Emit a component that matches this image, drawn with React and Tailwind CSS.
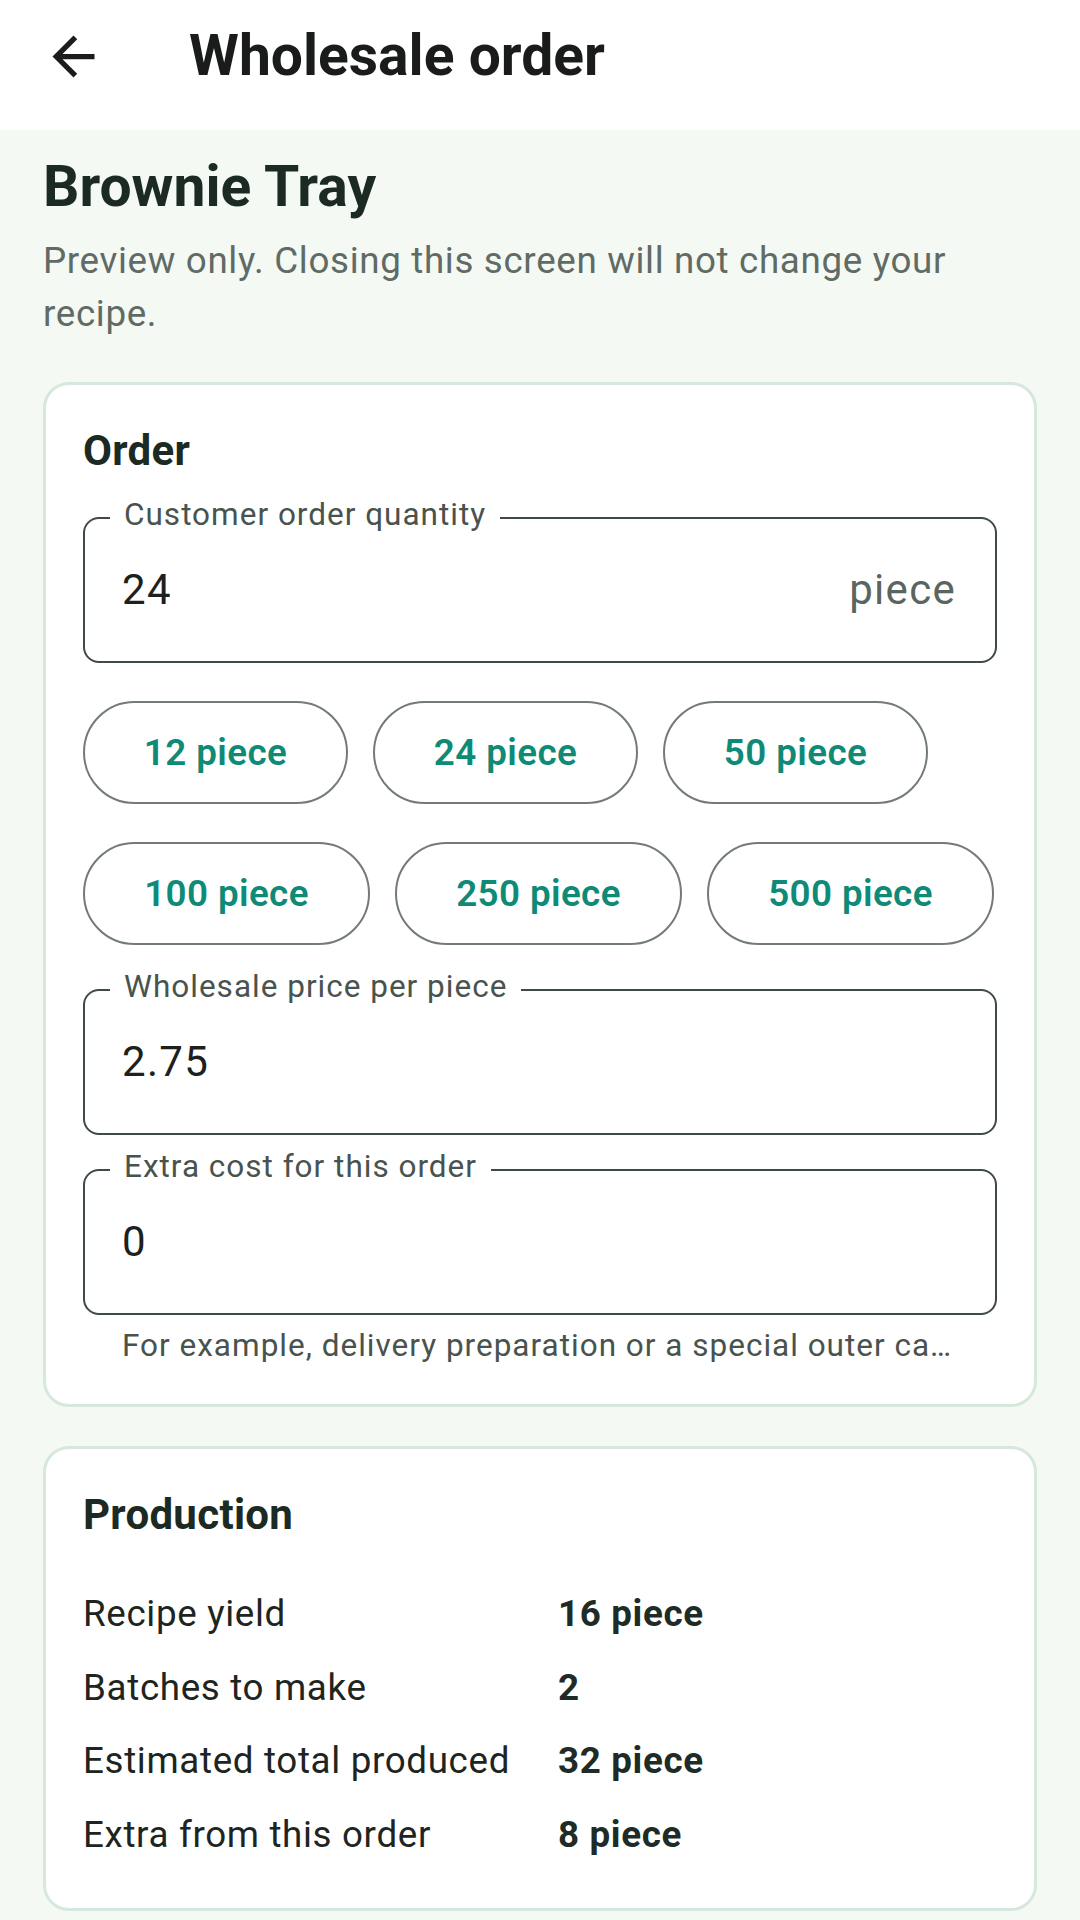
// App.jsx
import React from "react";

const Field = ({ label, value, suffix, className }) => {
  return (
    <div
      className={`relative h-[146px] rounded-[16px] border-2 border-[#3f4a45] flex items-center justify-between pl-[37px] pr-[39px] ${className}`}
    >
      <span className="absolute left-[25px] top-[-22px] bg-white px-[14px] text-[31.5px] leading-[36px] tracking-[1px] text-[#49534e]">
        {label}
      </span>
      <span className="text-[42px] leading-[48px] tracking-[1.3px] text-[#1c211e]">
        {value}
      </span>
      {suffix && (
        <span className="text-[42px] leading-[48px] tracking-[1.3px] text-[#5b6560]">
          {suffix}
        </span>
      )}
    </div>
  );
};

const Chip = ({ label, width }) => {
  return (
    <div
      className={`h-[103px] ${width} rounded-full border-2 border-[#737b76] flex items-center justify-center text-[36.75px] font-semibold tracking-[0.4px] text-[#0e8a77]`}
    >
      {label}
    </div>
  );
};

const Row = ({ label, value }) => {
  return (
    <div className="flex text-[36.75px] leading-[52.5px] tracking-[0.66px]">
      <div className="w-[475px] text-[#1e2520]">{label}</div>
      <div className="font-bold text-[#1e2b26]">{value}</div>
    </div>
  );
};

const App = () => {
  return (
    <div
      className="w-[1080px] min-h-[1920px] bg-[#f4f9f4]"
      style={{ fontFamily: "Roboto, 'Noto Sans', sans-serif" }}
    >
      <div className="h-[130px] bg-white flex items-center pb-[18px]">
        <svg
          className="ml-[42px] w-[63px] h-[63px]"
          viewBox="0 0 24 24"
          fill="#1b1d1c"
        >
          <path d="M20 11H7.83l5.59-5.59L12 4l-8 8 8 8 1.41-1.41L7.83 13H20v-2z" />
        </svg>
        <div className="ml-[84px] text-[57px] leading-[68px] font-bold text-[#1a1c1b]">
          Wholesale order
        </div>
      </div>

      <div className="px-[43px] pt-[23px] pb-[12px]">
        <div className="text-[57px] leading-[68px] font-bold text-[#1b2a23]">
          Brownie Tray
        </div>
        <div className="mt-[14px] text-[36.75px] leading-[52.5px] tracking-[0.66px] text-[#5f6b64]">
          Preview only. Closing this screen will not change your recipe.
        </div>

        <div className="mt-[42px] bg-white rounded-[26px] border-[3px] border-[#d6e8dd] px-[37px] pt-[42px] pb-[37px]">
          <div className="text-[42px] leading-[48px] font-bold tracking-[0.3px] text-[#1b2a23]">
            Order
          </div>
          <Field
            className="mt-[42px]"
            label="Customer order quantity"
            value="24"
            suffix="piece"
          />
          <div className="mt-[38px] flex gap-[25px]">
            <Chip label="12 piece" width="w-[265px]" />
            <Chip label="24 piece" width="w-[265px]" />
            <Chip label="50 piece" width="w-[265px]" />
          </div>
          <div className="mt-[38px] flex gap-[25px]">
            <Chip label="100 piece" width="w-[287px]" />
            <Chip label="250 piece" width="w-[287px]" />
            <Chip label="500 piece" width="w-[287px]" />
          </div>
          <Field
            className="mt-[44px]"
            label="Wholesale price per piece"
            value="2.75"
          />
          <Field
            className="mt-[34px]"
            label="Extra cost for this order"
            value="0"
          />
          <div className="mt-[10px] px-[39px] whitespace-nowrap text-[31.5px] leading-[42px] tracking-[1px] text-[#49534e]">
            For example, delivery preparation or a special outer ca…
          </div>
        </div>

        <div className="mt-[39px] bg-white rounded-[26px] border-[3px] border-[#d6e8dd] px-[37px] pt-[42px] pb-[47px]">
          <div className="text-[42px] leading-[48px] font-bold tracking-[0.3px] text-[#1b2a23]">
            Production
          </div>
          <div className="mt-[49px] flex flex-col gap-[21px]">
            <Row label="Recipe yield" value="16 piece" />
            <Row label="Batches to make" value="2" />
            <Row label="Estimated total produced" value="32 piece" />
            <Row label="Extra from this order" value="8 piece" />
          </div>
        </div>
      </div>
    </div>
  );
};

export default App;
